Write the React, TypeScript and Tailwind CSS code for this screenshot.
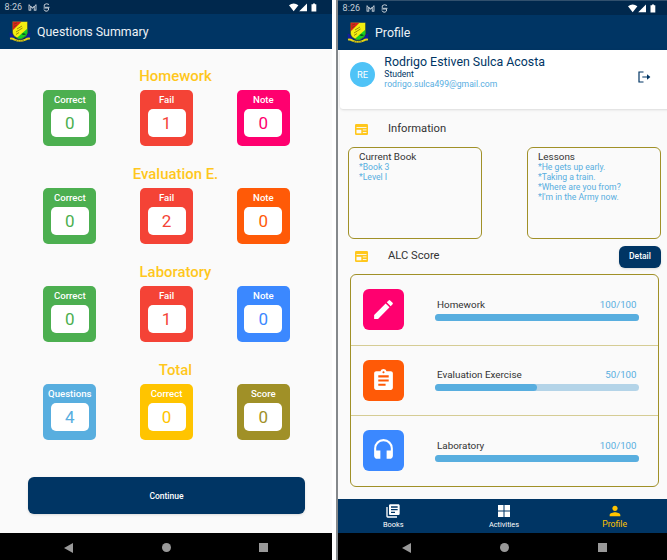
import React from "react";
import { MdEdit, MdAssignment, MdHeadset, MdLibraryBooks, MdPerson } from "react-icons/md";

function Crest() {
  return (
    <svg viewBox="0 0 22 22" className="h-[22px] w-[22px]">
      <path d="M.6 11.500 L3.600 13 L5.500 17 L2.500 18 L.9 16.500 Z M21.400 11.500 L18.400 13 L16.500 17 L19.500 18 L21.100 16.500 Z" fill="#141c9c" />
      <path d="M3.500 .8 H18.500 V11 C18.500 14.500 15 16.800 11 18.200 C7 16.800 3.500 14.500 3.500 11 Z" fill="#f3ee10" />
      <path d="M3.500 .8 H12.500 L3.500 9.500 Z" fill="#d9241c" />
      <path d="M18.500 7.500 V11 C18.500 14.500 15 16.800 11 18.200 L8 16.800 Z" fill="#17cf25" />
      <path d="M5 3 l3 -1 M5 5.500 l2.500 -1 M8 8 l5 -3 M7 11 l6.500 -4 M7 13.500 l3 -2" stroke="#5a4a08" strokeWidth=".6" />
      <path d="M12.500 13 q2 -1.800 4.500 .3 q-2.500 1.400 -4.500 -.3" fill="#0d4f20" />
      <path d="M3.500 .8 V11 C3.500 14.500 7 16.800 11 18.200 C15 16.800 18.500 14.500 18.500 11 V.8" fill="none" stroke="#2c3a28" strokeWidth=".5" />
      <path d="M1 17.600 q2.500 -.4 4.500 1 q5.500 2.600 11 0 q2 -1.400 4.500 -1" fill="none" stroke="#e6d512" strokeWidth="1.900" />
      <path d="M6.500 19.300 q4.500 1.400 9 0" fill="none" stroke="#5d5a1c" strokeWidth=".7" strokeDasharray="1.500 .8" />
    </svg>
  );
}

function StatusBar() {
  return (
    <div className="flex h-3.5 shrink-0 items-center bg-[#00284d] pl-[4.500px] pr-[15px] text-[9px] leading-none tracking-[0.1px] text-[#c3ccd5]">
      <span className="w-[23px]">8:26</span>
      <svg viewBox="0 0 10 8" className="h-[7px] w-[9px]" fill="none" stroke="#c3ccd5" strokeWidth="1.100">
        <path d="M1 .5 V7.500 M3 7.500 V2.500 L5 4.500 L7 2.500 V7.500 M9 .5 V7.500 M1 1 L5 4.800 L9 1 M1 7 H3 M7 7 H9" />
      </svg>
      <svg viewBox="0 0 7 9" className="ml-[6px] h-[9px] w-[7px]" fill="none" stroke="#c3ccd5" strokeWidth="1">
        <path d="M6 1.500 Q3.500 0 1.500 1.500 Q.3 4 2 4.300 H6.500 M.5 5 H5.500 Q6.300 7.500 4 8.200 Q1.500 8.500 1 6.500" />
      </svg>
      <svg viewBox="0 0 28 9" className="ml-auto h-[9px] w-7" fill="#fff">
        <path d="M0 2.300 Q4.700 -1.200 9.400 2.300 L4.700 8.300 Z M18 .5 V8.300 H10.200 Z M22.500 1.300 H24 V.4 H26 V1.300 H27.300 V8.500 H22.500 Z" />
      </svg>
    </div>
  );
}

function AppBar({ title }: { title: string }) {
  return (
    <div className="flex flex-1 items-center bg-[#003564] pl-[9px] text-[12.400px] text-[#edf2f6]">
      <Crest />
      <span className="ml-1.5 pt-px">{title}</span>
    </div>
  );
}

function SystemNav() {
  return (
    <div className="flex h-[27px] shrink-0 items-center justify-around bg-black px-[20px] pt-[2px]">
      <svg viewBox="0 0 10 10" className="h-[10px] w-[10px]" fill="#999"><path d="M9 0 V10 L0 5 Z" /></svg>
      <span className="size-[9px] rounded-full bg-[#999]" />
      <span className="size-[9px] bg-[#999]" />
    </div>
  );
}

const groups = [
  { title: "Homework", cards: [["Correct", "0", "bg-[#4caf50] text-[#4caf50]"], ["Fail", "1", "bg-[#f44336] text-[#f44336]"], ["Note", "0", "bg-[#ff006f] text-[#ff006f]"]] },
  { title: "Evaluation E.", cards: [["Correct", "0", "bg-[#4caf50] text-[#4caf50]"], ["Fail", "2", "bg-[#f44336] text-[#f44336]"], ["Note", "0", "bg-[#ff5a07] text-[#ff5a07]"]] },
  { title: "Laboratory", cards: [["Correct", "0", "bg-[#4caf50] text-[#4caf50]"], ["Fail", "1", "bg-[#f44336] text-[#f44336]"], ["Note", "0", "bg-[#3b88ff] text-[#3b88ff]"]] },
  { title: "Total", cards: [["Questions", "4", "bg-[#58aedf] text-[#58aedf]"], ["Correct", "0", "bg-[#ffc400] text-[#ffc400]"], ["Score", "0", "bg-[#a09027] text-[#a09027]"]] },
];

function Summary() {
  return (
    <div className="flex w-[332px] shrink-0 flex-col bg-[#fafafa]">
      <header className="flex h-[49px] shrink-0 flex-col"><StatusBar /><AppBar title="Questions Summary" /></header>
      <main className="flex flex-1 flex-col pt-[17px]">
        {groups.map((g) => (
          <section key={g.title} className="h-[98px]">
            <h2 className="h-6 pl-[19px] text-center text-[14.900px] font-medium leading-[20px] text-[#ffc71c]">{g.title}</h2>
            <div className="ml-[43.300px] flex gap-[43.800px]">
              {g.cards.map(([label, value, tone]) => (
                <div key={label} className={"flex h-14 w-[53px] flex-col items-center rounded-[5px] pt-[4px] " + tone}>
                  <span className="text-[9.600px] font-medium leading-[12px] text-white">{label}</span>
                  <span className="mt-[3px] flex h-7 w-[38px] items-center justify-center rounded-[5px] bg-white pt-px text-[17px]">{value}</span>
                </div>
              ))}
            </div>
          </section>
        ))}
        <button className="ml-7 mt-[19px] h-[37px] w-[277px] rounded-[6px] bg-[#003564] pt-px text-[8.500px] font-medium text-white shadow">Continue</button>
      </main>
      <SystemNav />
    </div>
  );
}

function SectionIcon() {
  return (
    <svg viewBox="0 0 13 11" className="h-[11px] w-[13px]">
      <rect width="13" height="11" rx="1.200" fill="#ffc71c" />
      <path d="M1.500 3.500 H11.500 M7.800 5.900 H11.500 M7.800 8.500 H11.500" stroke="#fafafa" strokeWidth=".9" />
      <rect x="1.500" y="5.800" width="4.800" height="3.500" fill="#fafafa" />
    </svg>
  );
}

const books = ["*Book 3", "*Level I"];
const lessons = ["*He gets up early.", "*Taking a train.", "*Where are you from?", "*I'm in the Army now."];

function InfoBox({ title, lines }: { title: string; lines: string[] }) {
  return (
    <div className="h-[92px] w-[133.500px] rounded-[6px] border border-[#a09027] pl-[10px] pt-[3px]">
      <h3 className="text-[9.900px] leading-[11px] text-[#333]">{title}</h3>
      {lines.map((l) => <p key={l} className="text-[8.650px] leading-[10px] text-[#58aedf]">{l}</p>)}
    </div>
  );
}

const scores = [
  { name: "Homework", score: 100, tone: "bg-[#ff006f]", Icon: MdEdit },
  { name: "Evaluation Exercise", score: 50, tone: "bg-[#ff5a07]", Icon: MdAssignment },
  { name: "Laboratory", score: 100, tone: "bg-[#3b88ff]", Icon: MdHeadset },
];

function Profile() {
  return (
    <div className="flex w-[335px] shrink-0 flex-col border-l-2 border-[#85898c] bg-[#fafafa]">
      <header className="flex h-[50px] shrink-0 flex-col bg-[#31506d] pt-px"><StatusBar /><AppBar title="Profile" /></header>
      <main className="flex flex-1 flex-col">
        <div className="ml-[2px] flex h-[59px] rounded-b-[3px] bg-white pl-[10px] shadow-sm">
          <span className="mt-3 flex size-[25px] items-center justify-center rounded-full bg-[#4fc3f7] text-[9.300px] text-white">RE</span>
          <div className="ml-[9.300px] pt-[5px] text-[#003564]">
            <div className="text-[12.350px] leading-[15px]">Rodrigo Estiven Sulca Acosta</div>
            <div className="text-[8.600px] leading-[9px]">Student</div>
            <div className="text-[8.650px] leading-[11px] text-[#58aedf]">rodrigo.sulca499@gmail.com</div>
          </div>
          <svg viewBox="0 0 13 12" className="ml-auto mr-[20px] mt-[21px] h-[12px] w-[13px]" fill="none" stroke="#003564" strokeWidth="1.200">
            <path d="M5.500 1 H1 V11 H5.500 M4.300 6 H10" />
            <path d="M9 3.200 L12.400 6 L9 8.800 Z" fill="#003564" stroke="none" />
          </svg>
        </div>
        <div className="flex h-[38px] items-center pl-[16.500px] pt-[2px] text-[11.200px] text-[#333]">
          <SectionIcon /><span className="ml-[20.500px] pt-px">Information</span>
        </div>
        <div className="flex gap-[45.500px] pl-[10px]">
          <InfoBox title="Current Book" lines={books} />
          <InfoBox title="Lessons" lines={lessons} />
        </div>
        <div className="flex h-[35px] items-center pl-[16.500px] text-[11.200px] text-[#333]">
          <SectionIcon /><span className="ml-[20.500px]">ALC Score</span>
          <button className="ml-auto mr-[10px] h-[22px] w-[42px] rounded-[6px] bg-[#003564] text-[8.500px] font-medium text-white shadow">Detail</button>
        </div>
        <div className="ml-3 flex h-[212.500px] w-[309px] flex-col rounded-[6px] border border-[#a09027]">
          {scores.map(({ name, score, tone, Icon }, i) => (
            <React.Fragment key={name}>
              {i > 0 && <div className="h-px shrink-0 bg-[#d5cc94]" />}
              <div className="flex flex-1 items-center pl-3">
                <span className={"flex size-[41px] items-center justify-center rounded-[6px] text-[25px] text-white " + tone}><Icon /></span>
                <div className="ml-[31px] w-[204px]">
                  <div className="flex justify-between pb-[3px] pl-[2px] pr-[2.500px] text-[9.900px] leading-[12px] text-[#333]">
                    <span>{name}</span><span className="text-[9.700px] text-[#58aedf]">{score}/100</span>
                  </div>
                  <div className="h-[7px] rounded-full bg-[#b4d4e8]">
                    <div className="h-full rounded-full bg-[#58aedf]" style={{ width: score + "%" }} />
                  </div>
                </div>
              </div>
            </React.Fragment>
          ))}
        </div>
      </main>
      <nav className="grid h-[34px] shrink-0 grid-cols-3 bg-[#003564] pr-px text-[7.400px] text-white">
        <div className="flex flex-col items-center pt-[4px]"><MdLibraryBooks className="text-[16px]" /><span>Books</span></div>
        <div className="flex flex-col items-center pt-[4px]">
          <svg viewBox="0 0 16 16" className="size-[16px]" fill="currentColor"><path d="M2 2h5.500v5.500H2zM8.500 2h5.500v5.500H8.500zM2 8.500h5.500v5.500H2zM8.500 8.500h5.500v5.500H8.500z" /></svg>
          <span>Activities</span>
        </div>
        <div className="flex flex-col items-center pt-[4px] text-[8.700px] leading-[11px] text-[#ffc400]"><MdPerson className="text-[16px]" /><span>Profile</span></div>
      </nav>
      <SystemNav />
    </div>
  );
}

export default function App() {
  return (
    <div className="flex h-[560px] w-[667px] gap-1 overflow-hidden bg-white font-['Roboto',sans-serif]">
      <Summary />
      <Profile />
    </div>
  );
}
